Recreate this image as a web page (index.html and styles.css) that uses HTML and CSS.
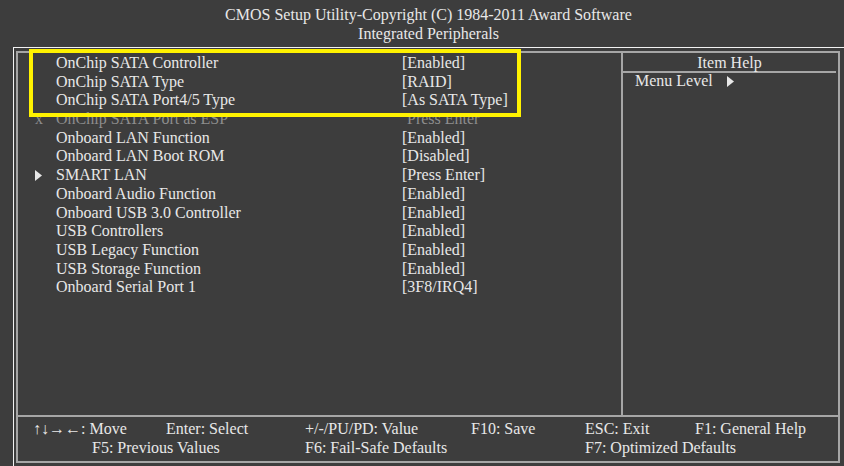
FILE: index.html
```html
<!DOCTYPE html>
<html>
<head lang="en">
    <meta charset="UTF-8">
    <title>Integrated Peripherals</title>
    <link rel="stylesheet" href="styles.css">
</head>
<body>
<div class="screen">
    <div class="title">
        CMOS Setup Utility-Copyright (C) 1984-2011 Award Software<br>
        Integrated Peripherals
    </div>
    <div class="window">
        <div class="frame">
            <div class="main">
                <ul class="items">
                    <li><span class="mark"></span><span class="label">OnChip SATA Controller</span><span class="value">[Enabled]</span></li>
                    <li><span class="mark"></span><span class="label">OnChip SATA Type</span><span class="value">[RAID]</span></li>
                    <li><span class="mark"></span><span class="label">OnChip SATA Port4/5 Type</span><span class="value">[As SATA Type]</span></li>
                    <li class="off"><span class="mark">x</span><span class="label">OnChip SATA Port as ESP</span><span class="value plain">Press Enter</span></li>
                    <li><span class="mark"></span><span class="label">Onboard LAN Function</span><span class="value">[Enabled]</span></li>
                    <li><span class="mark"></span><span class="label">Onboard LAN Boot ROM</span><span class="value">[Disabled]</span></li>
                    <li><span class="mark"><svg width="7" height="11" viewBox="0 0 7 11"><path d="M0 0 L7 5.5 L0 11 Z" fill="#e8e8e8"/></svg></span><span class="label">SMART LAN</span><span class="value">[Press Enter]</span></li>
                    <li><span class="mark"></span><span class="label">Onboard Audio Function</span><span class="value">[Enabled]</span></li>
                    <li><span class="mark"></span><span class="label">Onboard USB 3.0 Controller</span><span class="value">[Enabled]</span></li>
                    <li><span class="mark"></span><span class="label">USB Controllers</span><span class="value">[Enabled]</span></li>
                    <li><span class="mark"></span><span class="label">USB Legacy Function</span><span class="value">[Enabled]</span></li>
                    <li><span class="mark"></span><span class="label">USB Storage Function</span><span class="value">[Enabled]</span></li>
                    <li><span class="mark"></span><span class="label">Onboard Serial Port 1</span><span class="value">[3F8/IRQ4]</span></li>
                </ul>
            </div>
            <div class="help">
                <div class="help-title">Item Help</div>
                <div class="help-body">Menu Level <svg class="arrow" width="7" height="11" viewBox="0 0 7 11"><path d="M0 0 L7 5.5 L0 11 Z" fill="#e8e8e8"/></svg></div>
            </div>
            <div class="footer">
                <span class="k-move">&uarr;&darr;&rarr;&larr;: Move</span>
                <span class="k-enter">Enter: Select</span>
                <span class="k-value">+/-/PU/PD: Value</span>
                <span class="k-save">F10: Save</span>
                <span class="k-exit">ESC: Exit</span>
                <span class="k-help">F1: General Help</span>
                <span class="k-f5">F5: Previous Values</span>
                <span class="k-f6">F6: Fail-Safe Defaults</span>
                <span class="k-f7">F7: Optimized Defaults</span>
            </div>
        </div>
    </div>
    <div class="highlight"></div>
</div>
</body>
</html>
```

FILE: styles.css
```css
*{
    margin: 0;
    padding: 0;
    box-sizing: border-box;
}
ul{
    list-style: none;
}
body{
    background: #3d3d3d;
    font-family: "Liberation Serif", "Times New Roman", serif;
    font-size: 16px;
    color: #e8e8e8;
}
.screen{
    position: relative;
    width: 844px;
    height: 466px;
    background: #3d3d3d;
    overflow: hidden;
}
.title{
    padding: 6px 0 0 13px;
    height: 47px;
    line-height: 18.5px;
    text-align: center;
}
.window{
    margin-left: 13px;
    height: 419px;
    border-top: 1px solid #f2f2f2;
    border-left: 1px solid #f2f2f2;
    padding: 3px 0 0 2px;
}
.frame{
    width: 824px;
    height: 412px;
    border: 2px solid #a6a6a6;
    display: grid;
    grid-template-columns: 603px 1fr;
    grid-template-rows: 362px 1fr;
}
.main{
    padding: 1px 0 0 15px;
}
.items li{
    display: flex;
    height: 18.7px;
    line-height: 18.7px;
    white-space: nowrap;
}
.mark{
    width: 23px;
    display: flex;
    align-items: center;
    padding-left: 2px;
}
.label{
    width: 346px;
}
.off{
    color: #8e8e8e;
}
.value.plain{
    padding-left: 5px;
}
.help{
    border-left: 2px solid #a6a6a6;
}
.help-title{
    height: 20px;
    padding-top: 1px;
    line-height: 18.7px;
    text-align: center;
    border-bottom: 2px solid #a6a6a6;
    margin-right: 2px;
}
.help-body{
    padding-left: 12px;
    line-height: 16px;
    display: flex;
    align-items: center;
}
.help-body .arrow{
    margin-left: 14px;
}
.footer{
    grid-column: 1 / 3;
    border-top: 2px solid #a6a6a6;
    padding: 3px 0 0 15px;
    display: grid;
    grid-template-columns: 59px 74px 139px 166px 114px 110px 1fr;
    grid-auto-rows: 18.5px;
    line-height: 18.5px;
    white-space: nowrap;
}
.k-move{ grid-column: 1 / 3; grid-row: 1; }
.k-enter{ grid-column: 3; grid-row: 1; }
.k-value{ grid-column: 4; grid-row: 1; }
.k-save{ grid-column: 5; grid-row: 1; }
.k-exit{ grid-column: 6; grid-row: 1; }
.k-help{ grid-column: 7; grid-row: 1; }
.k-f5{ grid-column: 2 / 4; grid-row: 2; }
.k-f6{ grid-column: 4 / 6; grid-row: 2; }
.k-f7{ grid-column: 6 / 8; grid-row: 2; }
.highlight{
    position: absolute;
    left: 29px;
    top: 49px;
    width: 492px;
    height: 68px;
    border: 4px solid #fff200;
}
```
